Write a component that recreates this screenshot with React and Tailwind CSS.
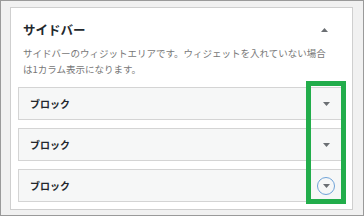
const Down = () => (
  <svg width="7" height="4" viewBox="0 0 7 4">
    <polygon points="0,0 7,0 3.5,4" fill="#6b6f73" />
  </svg>
);

const Up = () => (
  <svg width="7" height="4" viewBox="0 0 7 4">
    <polygon points="0,4 7,4 3.5,0" fill="#6b6f73" />
  </svg>
);

const Row = ({ focused }) => (
  <div className="flex items-center justify-between h-[33px] border border-[#d4d4d4] bg-[#f6f7f7] pl-[11px] pr-[9px]">
    <span className="text-[10px] font-bold text-[#23282d] leading-none">ブロック</span>
    <span
      className={
        focused
          ? "flex items-center justify-center w-[18px] h-[18px] rounded-full border border-[#6fa3d8]"
          : "flex items-center justify-center w-[18px] h-[18px]"
      }
    >
      <Down />
    </span>
  </div>
);

export default function App() {
  return (
    <div
      className="relative w-[364px] h-[216px] border border-[#9a9a9a] bg-[#f1f1f1] pt-[6px] pl-[9px]"
      style={{ fontFamily: '"Noto Sans CJK JP", "Noto Sans", sans-serif' }}
    >
      <div className="w-[343px] h-[203px] border border-[#cfcfcf] bg-white">
        <div className="flex items-center justify-between mt-[14px] pl-[12px] pr-[24px] h-[16px]">
          <span className="text-[12.5px] font-bold text-[#23282d] leading-none">サイドバー</span>
          <Up />
        </div>
        <p className="mt-[7px] pl-[12px] text-[9.5px] leading-[16px] text-[#777] whitespace-nowrap">
          サイドバーのウィジットエリアです。ウィジェットを入れていない場合
          <br />
          は1カラム表示になります。
        </p>
        <div className="mt-[10px] mx-[7px] flex flex-col gap-[8px]">
          <Row />
          <Row />
          <Row focused />
        </div>
      </div>
      <div className="absolute left-[305px] top-[80px] w-[40px] h-[123px] border-[5px] border-[#22ad4b]" />
    </div>
  );
}
